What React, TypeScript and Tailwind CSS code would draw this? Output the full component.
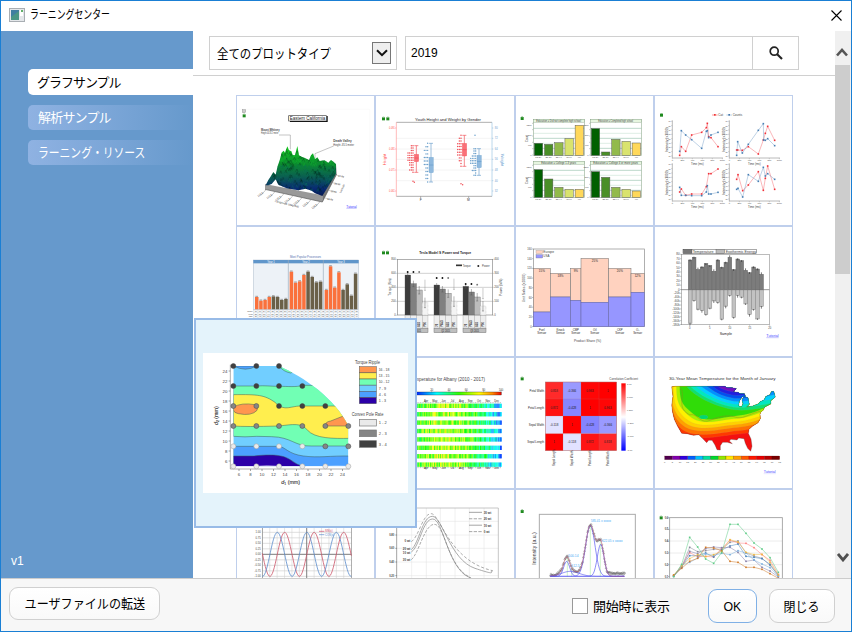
import React from 'react';

type P = [number, number];

/** Deterministic noise so that every render gives the same chart. */
function noise(n: number): number {
  const v = Math.sin(n * 127.1 + 311.7) * 43758.5453;
  return v - Math.floor(v);
}

const pts = (list: P[]) => list.map((p) => p.join(',')).join(' ');

function curve(from: number, to: number, f: (x: number) => number, step = 3): string {
  const out: string[] = [];
  for (let x = from; x <= to; x += step) out.push(`${x},${f(x).toFixed(1)}`);
  return out.join(' ');
}

const range = (n: number) => Array.from({ length: n }, (_, i) => i);

function T({ x, y, s = 12, a = 'start', c = '#444', r, b, children, w }: {
  x: number; y: number; s?: number; a?: 'start' | 'middle' | 'end'; c?: string; r?: number; b?: boolean; w?: number; children: React.ReactNode;
}) {
  return (
    <text
      x={x} y={y} fontSize={s} textAnchor={a} fill={c} fontWeight={b ? 700 : 400}
      textLength={w} lengthAdjust="spacingAndGlyphs"
      transform={r ? `rotate(${r} ${x} ${y})` : undefined}
    >
      {children}
    </text>
  );
}

function Lock({ x, y }: { x: number; y: number }) {
  return (
    <g>
      <rect x={x} y={y} width="9" height="9" fill="#1f8a1f" />
      <rect x={x + 2} y={y - 2} width="5" height="3" fill="#8abf8a" />
    </g>
  );
}

function Chart({ box, children }: { box: string; children: React.ReactNode }) {
  return (
    <svg viewBox={box} preserveAspectRatio="none" className="block h-full w-full font-['Liberation_Sans',sans-serif]">
      {children}
    </svg>
  );
}

function Surface() {
  const shape: P[] = [
    [92, 280], [100, 264], [108, 252], [115, 240], [122, 248], [128, 222], [134, 205], [140, 182], [146, 176], [150, 182], [157, 163],
    [162, 175], [169, 178], [173, 189], [180, 190], [187, 162], [192, 190], [200, 194], [210, 198], [222, 204], [228, 190], [234, 184],
    [240, 202], [247, 196], [254, 207], [268, 205], [280, 212], [288, 204], [296, 210], [303, 216], [303, 245], [262, 312], [240, 304],
    [230, 296], [212, 290], [190, 295], [155, 289], [130, 278], [122, 262], [110, 276], [100, 280],
  ];
  return (
    <Chart box="6 12 411 387">
      <defs>
        <clipPath id="surfClip"><polygon points={pts(shape)} /></clipPath>
        <linearGradient id="surfFill" gradientUnits="userSpaceOnUse" x1="0" y1="165" x2="0" y2="312">
          <stop offset="0" stopColor="#14c81e" /><stop offset=".35" stopColor="#0b8a30" />
          <stop offset=".6" stopColor="#0a6050" /><stop offset=".85" stopColor="#082a74" /><stop offset="1" stopColor="#061a50" />
        </linearGradient>
      </defs>
      <path d="M12 52H404V360" fill="none" stroke="#f2f2f2" />
      <rect x="22" y="53" width="10" height="9" fill="#ccc" stroke="#777" />
      <Lock x={23} y={67} />
      <path d="M165 88H276V72" fill="none" stroke="#000" strokeWidth="4" />
      <rect x="161" y="71" width="113" height="16" fill="#fff" stroke="#444" strokeWidth="2" />
      <T x={164} y={84} s={14} w={107} c="#222">Eastern California</T>
      <T x={78} y={117} s={9} b w={56}>Mount Whitney</T>
      <T x={78} y={127} s={8} w={52}>Height 4418.2 meter</T>
      <path d="M132 129H166V172M296 162L240 185V200" fill="none" stroke="#888" strokeWidth="1.5" />
      <T x={295} y={151} s={9} b w={55}>Death Valley</T>
      <T x={295} y={161} s={8} w={62}>Height -85.5 meter</T>
      <polygon points="90,276 262,310 262,330 90,292" fill="#999" />
      <polygon points="262,310 303,215 305,246 262,330" fill="#777" />
      <polygon points={pts(shape)} fill="url(#surfFill)" />
      <g clipPath="url(#surfClip)">
        {range(420).map((i) => {
          const x = 90 + noise(i) * 215;
          const y = 165 + noise(i + 900) * 145;
          const dark = i % 2 === 0;
          return <path key={i} d={`M${x} ${y}l${2 + noise(i + 50) * 3} -8l3 9`} fill="none" stroke={dark ? '#04251f' : y < 225 ? '#18c030' : '#10705c'} strokeWidth="1.6" opacity=".5" />;
        })}
      </g>
      <path d="M90 292L262 330L305 246" fill="none" stroke="#555" strokeWidth="2" />
      {range(7).map((i) => (
        <g key={i}>
          <path d={`M${92 + i * 27} ${294 + i * 6}l-14 16`} stroke="#777" strokeWidth="1.3" />
          <T x={70 + i * 27} y={316 + i * 6} s={8} r={-40}>{`${118 + i}.0`}</T>
        </g>
      ))}
      {range(4).map((i) => (
        <g key={i}>
          <path d={`M${303 - i * 11} ${249 + i * 23}l24 6`} stroke="#999" strokeWidth="1.3" />
          <T x={309 - i * 11} y={254 + i * 23} s={7} r={10}>{`${37 - i}.50`}</T>
        </g>
      ))}
      <T x={119} y={330} s={8} r={13} w={74}>Longitude (degree)</T>
      <T x={318} y={304} s={8} r={-65}>Latitude</T>
      <T x={334} y={347} s={11} c="#33f" w={31}>Tutorial</T>
      <path d="M334 349H365" stroke="#55f" />
    </Chart>
  );
}

function BoxGroup({ x, top, boxTop, boxBottom, bottom, color, fill, seed }: {
  x: number; top: number; boxTop: number; boxBottom: number; bottom: number; color: string; fill: string; seed: number;
}) {
  return (
    <g>
      <path d={`M${x} ${top}V${bottom}M${x - 6} ${top}h12M${x - 6} ${bottom}h12`} stroke={color} strokeWidth="2" />
      <rect x={x - 6} y={boxTop} width="13" height={boxBottom - boxTop} fill={fill} stroke={color} />
      <path d={`M${x - 6} ${(boxTop + boxBottom) / 2}h13`} stroke={color} strokeWidth="2" />
      {range(12).map((i) => {
        const y = top + ((bottom - top) * i) / 11;
        const mid = 1 - Math.abs(i - 5.5) / 5.5;
        const count = 1 + Math.floor(noise(seed + i) * 2 + mid * 2);
        return range(count).map((k) => <circle key={`${i}-${k}`} cx={x - 10 - k * 5} cy={y} r="2.2" fill={color} />);
      })}
    </g>
  );
}

function YouthBox() {
  return (
    <Chart box="423 12 414 387">
      <Lock x={441} y={76} /><Lock x={454} y={76} />
      <T x={540} y={87} s={13} w={198} c="#222">Youth Height and Weight by Gender</T>
      <path d="M484 139H771M484 171H771M484 202H771M484 234H771M484 266H771" stroke="#eee" strokeWidth="2" />
      <path d="M484 91H771M484 313H771M557 313v6M701 313v6" stroke="#888" strokeWidth="2" />
      <path d="M484 91V313M480 108h4M480 171h4M480 234h4M480 297h4" stroke="#f99" strokeWidth="2" />
      <path d="M771 91V313M771 108h4M771 139h4M771 171h4M771 202h4M771 234h4M771 266h4M771 297h4" stroke="#9bc4e2" strokeWidth="2" />
      {[108, 171, 234, 297].map((y, i) => <T key={y} x={462} y={y + 3} s={8} c="#f44" w={17}>{`0.0${9 - i}1`}</T>)}
      {[108, 139, 171, 202, 234, 266, 297].map((y, i) => <T key={y} x={779} y={y + 3} s={8} c="#6aa0d0">{80 - i * 8}</T>)}
      <T x={454} y={220} s={12} c="#f44" r={-90}>Height</T>
      <T x={799} y={185} s={12} c="#6aa0d0" r={90}>Weight</T>
      <BoxGroup x={544} top={161} boxTop={187} boxBottom={209} bottom={241} color="#f05058" fill="#fa7078" seed={3} />
      <BoxGroup x={588} top={154} boxTop={196} boxBottom={242} bottom={270} color="#6a9fcb" fill="#8fb9de" seed={21} />
      <BoxGroup x={688} top={130} boxTop={154} boxBottom={192} bottom={223} color="#f05058" fill="#fa7078" seed={42} />
      <BoxGroup x={732} top={170} boxTop={190} boxBottom={227} bottom={250} color="#6a9fcb" fill="#8fb9de" seed={66} />
      {[[534, 268], [538, 271], [678, 275], [683, 278]].map(([x, y]) => <circle key={x} cx={x} cy={y} r="2.2" fill="#f05058" />)}
      <circle cx="720" cy="130" r="2.2" fill="#6a9fcb" />
      <T x={557} y={328} s={10} a="middle">F</T>
      <T x={700} y={328} s={10} a="middle">M</T>
    </Chart>
  );
}

const GREENS = ['#006000', '#4a8f27', '#92ba4b', '#d9e36e', '#ffd85a'];

function EducationBars() {
  const panels = [
    { x: 61, y: 82, tops: [154, 157, 152, 140, 100], title: 'Education = Did not complete high school' },
    { x: 232, y: 82, tops: [110, 180, 142, 148, 153], title: 'Education = Completed high school' },
    { x: 61, y: 208, tops: [233, 261, 286, 292, 292], title: 'Education = College 1-3 years' },
    { x: 232, y: 208, tops: [239, 256, 286, 292, 297], title: 'Education = College 4 or more years' },
  ];
  return (
    <Chart box="9 12 411 387">
      <Lock x={23} y={75} />
      {panels.map((p, k) => (
        <g key={k}>
          {range(6).map((i) => (
            <g key={i}>
              <path d={`M${p.x} ${p.y + 27 + i * 15}h153`} stroke={i % 2 ? '#cfe5da' : '#9cc4b0'} strokeWidth="2" />
              <path d={`M${p.x - 4} ${p.y + 12 + i * 19}h4`} stroke="#666" />
            </g>
          ))}
          <rect x={p.x} y={p.y} width="153" height="108" fill="none" stroke="#9cb59c" strokeWidth="2" />
          <rect x={p.x} y={p.y} width="153" height="9" fill="#e6f5df" stroke="#7b967b" />
          <T x={p.x + 76} y={p.y + 8} s={8} a="middle" w={k % 3 ? 104 : 134} c="#444">{p.title}</T>
          {p.tops.map((t, i) => (
            <g key={i}>
              <rect x={p.x + 3 + i * 30.6} y={t} width="25" height={p.y + 108 - t} fill={GREENS[i]} stroke="#555" strokeWidth="1.4" />
              <T x={p.x + 15 + i * 30.6} y={p.y + 116} s={7} a="middle">{['18-24', '25-34', '35-44', '45-64', '>64'][i]}</T>
            </g>
          ))}
          {range(4).map((i) => <T key={i} x={p.x - 5} y={p.y + 110 - i * 30} s={7} a="end">{i ? i * 400 : 0}</T>)}
          {p.x < 100 && <T x={46} y={p.y + 68} s={8} r={-90}>Count</T>}
        </g>
      ))}
    </Chart>
  );
}

function Series({ points, color, size = 2.4, width = 1.5 }: { points: P[]; color: string; size?: number; width?: number }) {
  return (
    <g>
      <polyline points={pts(points)} fill="none" stroke={color} strokeWidth={width} opacity=".7" />
      {points.map((p, i) => <rect key={i} x={p[0] - size} y={p[1] - size} width={size * 2} height={size * 2} fill={color} />)}
    </g>
  );
}

function LinePanels() {
  const panels: { x: number; y: number; red: P[]; blue: P[] }[] = [
    {
      x: 478, y: 85,
      red: [[500, 190], [505, 164], [518, 178], [536, 129], [566, 121], [580, 107], [583, 94], [587, 134], [594, 137], [615, 164]],
      blue: [[500, 178], [505, 116], [518, 129], [536, 143], [566, 169], [580, 118], [583, 116], [587, 137], [594, 129], [615, 121]],
    },
    {
      x: 649, y: 85,
      red: [[671, 174], [674, 174], [688, 175], [706, 164], [736, 186], [751, 144], [757, 124], [764, 103], [785, 145]],
      blue: [[671, 190], [674, 149], [688, 183], [706, 157], [736, 115], [751, 95], [752, 144], [757, 145], [764, 140], [785, 161]],
    },
    {
      x: 478, y: 214,
      red: [[500, 300], [505, 291], [518, 310], [536, 306], [566, 306], [580, 284], [587, 245], [594, 245], [615, 231]],
      blue: [[500, 286], [505, 310], [518, 310], [536, 311], [566, 311], [580, 300], [583, 281], [587, 306], [594, 306], [615, 301]],
    },
    {
      x: 649, y: 214,
      red: [[671, 262], [675, 248], [689, 296], [706, 279], [736, 239], [751, 295], [757, 259], [764, 222], [785, 292]],
      blue: [[671, 292], [675, 289], [689, 315], [706, 248], [736, 268], [751, 226], [757, 252], [764, 245], [785, 262]],
    },
  ];
  return (
    <Chart box="426 12 411 387">
      <Lock x={441} y={65} />
      <path d="M597 69h17" stroke="#f66" strokeWidth="2" /><rect x="603" y="66" width="5" height="5" fill="#e33" />
      <path d="M640 69h17" stroke="#9bd" strokeWidth="2" /><rect x="646" y="66" width="5" height="5" fill="#47a" />
      <T x={616} y={73} s={9}>Cat</T><T x={659} y={73} s={9}>Counts</T>
      {panels.map((p, k) => (
        <g key={k}>
          <path d={`M${p.x} ${p.y}v113h152`} fill="none" stroke="#999" strokeWidth="2" />
          {range(6).map((i) => (
            <g key={i}>
              <path d={`M${p.x + i * 30} ${p.y + 113}v4`} stroke="#888" />
              <T x={p.x + i * 30} y={p.y + 122} s={7} a="middle">{i * 200}</T>
            </g>
          ))}
          {range(9).map((i) => (
            <g key={i}>
              <path d={`M${p.x - 4} ${p.y + 3 + i * 13}h4`} stroke="#888" />
              <T x={p.x - 5} y={p.y + 6 + i * 13} s={6} a="end">{90 - i * 10}</T>
            </g>
          ))}
          <T x={p.x + 75} y={p.y + 133} s={10} a="middle" w={38}>Time (ms)</T>
          <T x={p.x - 13} y={p.y + 95} s={8} r={-90} w={74}>Intensity (x1000)</T>
          <Series points={p.red} color="#f03038" />
          <Series points={p.blue} color="#477fb5" />
        </g>
      ))}
    </Chart>
  );
}

function OrangeBars() {
  const groups = [
    { x: 60, tops: [219, 230, 228, 219, 217, 219, 228, 225] },
    { x: 164, tops: [143, 176, 172, 153, 143, 159, 175, 173] },
    { x: 269, tops: [198, 127, 191, 145, 198, 181, 215, 149] },
  ];
  return (
    <Chart box="6 9 411 387">
      <T x={165} y={102} s={10} c="#5570b0" w={93}>Most Popular Processors</T>
      <rect x="55" y="108" width="316" height="148" fill="#edf2f7" stroke="#aebccc" strokeWidth="1.5" />
      <rect x="55" y="108" width="316" height="10" fill="#6096ca" />
      {['Year 1', 'Year 2', 'Year 3'].map((s, i) => <T key={s} x={108 + i * 105} y={116} s={8} a="middle" c="#fff">{s}</T>)}
      <path d="M160 108V256M265 108V256" stroke="#9ab" strokeWidth="2" />
      {groups.map((g) => g.tops.map((t, i) => (
        <g key={`${g.x}-${i}`}>
          <rect x={g.x + i * 12.5} y={t} width="10.5" height={256 - t} fill={i < 4 ? '#fa713c' : '#6a6048'} />
          <path d={`M${g.x + i * 12.5 + 1} ${t - 2}h8`} stroke="#777" strokeWidth="2" />
        </g>
      )))}
      {[258, 266, 274, 282].map((y) => <path key={y} d={`M55 ${y}H371`} stroke="#aab8c8" />)}
      {range(26).map((i) => <path key={i} d={`M${56 + i * 12.6} 256V284`} stroke="#aab8c8" />)}
      {range(3).map((r) => (
        <g key={r}>
          <T x={53} y={264 + r * 8} s={6} a="end">{['Model', 'Freq', 'TDP'][r]}</T>
          {range(25).map((i) => <T key={i} x={59 + i * 12.6} y={264 + r * 8} s={6}>{10 + ((i * 7 + r * 13) % 80)}</T>)}
        </g>
      ))}
    </Chart>
  );
}

function TeslaBars() {
  const groups = [
    { x: 510, tops: [153, 179, 198, 236], marks: [144, 144, 144, 183] },
    { x: 597, tops: [183, 195, 208, 232], marks: [162, 162, 162, 180] },
    { x: 684, tops: [187, 204, 219, 246], marks: [180, 180, 182, 208] },
  ];
  const fills = ['#3c3c3c', '#808080', '#bcbcbc', '#f4f4f4'];
  return (
    <Chart box="423 9 414 387">
      <Lock x={441} y={82} /><Lock x={453} y={82} />
      <T x={553} y={90} s={12} b c="#222" w={155}>Tesla Model S Power and Torque</T>
      <path d="M487 148H773M487 190H773M487 232H773" stroke="#aaa" strokeWidth="1.6" />
      <rect x="487" y="106" width="286" height="167" fill="none" stroke="#888" strokeWidth="2" />
      {range(5).map((i) => (
        <g key={i}>
          <path d={`M483 ${106 + i * 42}h4M773 ${106 + i * 42}h4`} stroke="#888" />
          <T x={482} y={109 + i * 42} s={8} a="end">{800 - i * 200}</T>
          <T x={778} y={109 + i * 42} s={8}>{400 - i * 100}</T>
        </g>
      ))}
      <T x={467} y={215} s={11} r={-90} w={52}>Torque (Nm)</T>
      <T x={800} y={216} s={11} r={-90} w={52}>Power (kW)</T>
      <path d="M663 124h18" stroke="#333" strokeWidth="5" /><T x={683} y={130} s={8}>Torque</T>
      <circle cx="730" cy="126" r="3" fill="#222" /><T x={741} y={129} s={8}>Power</T>
      {groups.map((g, k) => (
        <g key={k}>
          {g.tops.map((t, i) => {
            const x = g.x + i * 17.3;
            return (
              <g key={i}>
                <rect x={x} y={t} width="17" height={273 - t} fill={fills[i]} stroke={i === 3 ? '#999' : '#555'} strokeDasharray={i === 3 ? '2 2' : undefined} />
                <path d={`M${x + 8} ${t - 6 - i * 3}v${12 + i * 6}m-3 0h6`} stroke="#555" strokeWidth="1.3" />
                {i === 3
                  ? <path d={`M${x + 8} ${g.marks[i] - 16}v32m-3 0h6`} stroke="#888" strokeWidth="1.3" />
                  : <circle cx={x + 8} cy={g.marks[i]} r="2.8" fill={i === 2 ? '#777' : '#111'} />}
                <rect x={x} y="275" width="17" height="37" fill="#eee" stroke="#999" />
                <T x={x + 11} y={308} s={8} r={-90} b c="#222">{['70', 'P85D', '85D', 'P90'][i]}</T>
              </g>
            );
          })}
          <rect x={g.x} y="313" width="69" height="13" fill="#bfbfbf" stroke="#777" strokeWidth="1.5" />
          <T x={g.x + 35} y={323} s={9} a="middle" c="#111" w={26}>{['Q1 2015', 'Q2 2015', 'Q3 2015'][k]}</T>
        </g>
      ))}
    </Chart>
  );
}

function SensorShare() {
  const xs = [61, 112, 173, 204, 287, 354, 394];
  const peach = [133, 148, 133, 103, 133, 148];
  const blue = [264, 219, 229, 235, 219, 205];
  const names = ['Fuel', 'Knock', 'CMP', 'Oil', 'CKP', 'O₂'];
  const share = ['15%', '18%', '9%', '25%', '20%', '12%'];
  return (
    <Chart box="9 9 411 387">
      <rect x="61" y="75" width="333" height="233" fill="none" stroke="#888" strokeWidth="2" />
      {peach.map((t, i) => {
        const w = xs[i + 1] - xs[i];
        return (
          <g key={i}>
            <rect x={xs[i]} y={t} width={w} height={blue[i] - t} fill="#ffd2bf" stroke="#777" strokeWidth="1.6" />
            <rect x={xs[i]} y={blue[i]} width={w} height={308 - blue[i]} fill="#9696ff" stroke="#6666a5" strokeWidth="1.6" />
            <T x={xs[i] + w / 2} y={t + 12} s={9} a="middle" c="#222">{share[i]}</T>
            <T x={xs[i] + w / 2} y={320} s={8.5} a="middle" c="#222">{names[i]}</T>
            <T x={xs[i] + w / 2} y={330} s={8.5} a="middle" c="#222">Sensor</T>
          </g>
        );
      })}
      <rect x="69" y="79" width="20" height="10" fill="#ffd2bf" stroke="#999" />
      <rect x="69" y="92" width="20" height="10" fill="#9696ff" stroke="#777" />
      <T x={91} y={88} s={10}>Europe</T><T x={91} y={100} s={10} w={18}>USA</T>
      {range(9).map((i) => (
        <g key={i}><path d={`M57 ${75 + i * 29.1}h4`} stroke="#888" strokeWidth="1.5" /><T x={56} y={78 + i * 29.1} s={8} a="end">{160 - i * 20}</T></g>
      ))}
      <T x={36} y={235} s={11} r={-90} w={86}>Unit Sales (x1000)</T>
      <T x={183} y={353} s={12} w={81}>Product Share (%)</T>
    </Chart>
  );
}

function MirrorBars() {
  const up = [108, 100, 137, 129, 119, 125, 142, 108, 130, 115, 100, 137, 105, 110, 139, 146, 129, 135, 151];
  const down = [298, 230, 256, 260, 272, 253, 231, 236, 286, 247, 215, 281, 215, 220, 240, 272, 257, 285, 248];
  return (
    <Chart box="426 9 411 387">
      <rect x="510" y="76" width="221" height="12" fill="#fff" stroke="#555" strokeWidth="1.5" />
      <rect x="511" y="76" width="26" height="12" fill="#777" stroke="#444" />
      <rect x="609" y="76" width="26" height="12" fill="#bbb" stroke="#444" />
      <T x={539} y={86} s={12} w={63}>Temperature</T><T x={638} y={86} s={12} w={91}>Exothermic Energy</T>
      <rect x="505" y="91" width="264" height="211" fill="none" stroke="#999" strokeWidth="2" />
      {up.map((t, i) => (
        <g key={i}>
          <rect x={526 + i * 11.9} y={t} width="11" height={197 - t} fill="#7c7c7c" stroke="#555" strokeWidth="1.3" />
          <path d={`M${531 + i * 11.9} ${t - (i % 4 === 2 ? 6 : 2)}v6`} stroke="#333" strokeWidth="2" />
          <rect x={526 + i * 11.9} y="197" width="11" height={down[i] - 197} fill="#c2c2c2" stroke="#777" strokeWidth="1.2" />
          <path d={`M${531 + i * 11.9} ${down[i] - 2}v${i % 3 ? 5 : 8}`} stroke="#444" strokeWidth="2" />
        </g>
      ))}
      <path d="M505 197H769" stroke="#666" strokeWidth="2" />
      {range(9).map((i) => (
        <g key={i}>
          <path d={`M501 ${91 + i * 13.2}h4M501 ${208 + i * 11.7}h4`} stroke="#555" />
          <T x={500} y={94 + i * 13.2} s={9} a="end">{80 - i * 10}</T>
          <T x={500} y={211 + i * 11.7} s={9} a="end">{`-${(i + 1) * 20}k`}</T>
        </g>
      ))}
      {range(5).map((i) => <g key={i}><path d={`M${530 + i * 60} 302v5`} stroke="#777" /><T x={530 + i * 60} y={316} s={8} a="middle">{i * 5}</T></g>)}
      <T x={620} y={333} s={11} w={37} c="#222">Sample</T>
      <T x={760} y={339} s={11} w={37} c="#44f">Tutorial</T><path d="M760 341H797" stroke="#55f" />
    </Chart>
  );
}

function stripColor(t: number, n: number): string {
  const warmth = Math.sin(t * Math.PI) + (n - 0.5) * 0.5;
  const hue = Math.max(50, Math.min(225, 218 - warmth * 136));
  return `hsl(${hue.toFixed(0)} 100% 50%)`;
}

function AlbanyStrips() {
  return (
    <Chart box="-102 9 414 390">
      <defs>
        <linearGradient id="albanyBar">
          <stop offset="0" stopColor="#00c" /><stop offset=".25" stopColor="#03f" /><stop offset=".42" stopColor="#0ff" />
          <stop offset=".62" stopColor="#3f0" /><stop offset=".8" stopColor="#ff0" /><stop offset=".92" stopColor="#f80" /><stop offset="1" stopColor="#e00" />
        </linearGradient>
      </defs>
      <T x={-32} y={77} s={14} w={257}>Daily Temperature for Albany (2010 - 2017)</T>
      <rect x="-60" y="111" width="334" height="9" fill="url(#albanyBar)" stroke="#222" />
      {[15, 65, 117, 169, 221, 273].map((x, i) => <g key={x}><path d={`M${x} 104v8`} stroke="#555" /><T x={x} y={109} s={8} a="middle">{i * 20}</T></g>)}
      <path d="M-60 143H274M-60 338H274" stroke="#444" strokeDasharray="3 2" />
      {['Apr', 'May', 'Jun', 'Jul', 'Aug', 'Sep', 'Oct', 'Nov', 'Dec'].map((m, i) => (
        <g key={m}><T x={48 + i * 26.5} y={141} s={8} a="middle" c="#222">{m}</T><T x={48 + i * 26.5} y={342} s={8} a="middle" c="#222">{m}</T></g>
      ))}
      {range(8).map((r) => (
        <g key={r}>
          {range(134).map((i) => <rect key={i} x={-60 + i * 2.5} y={146 + r * 25.2} width="2.8" height="13" fill={stripColor((i + 4) / 140, noise(i * 3 + r * 211))} />)}
        </g>
      ))}
    </Chart>
  );
}

function Correlation() {
  const xs = [406, 459, 513, 567, 620];
  const ys = [81, 132, 183, 236, 287];
  const cells = [
    ['#ff2a2a', '#9a9aff', '#ff0606', '#ff0000'],
    ['#ff1212', '#8686ff', '#ff0000', '#ff0606'],
    ['#e2e2ff', '#ff0000', '#8484ff', '#9a9aff'],
    ['#ff0000', '#e2e2ff', '#ff1414', '#ff2828'],
  ];
  const values = [['0.818', '-0.366', '0.963', '1'], ['0.872', '-0.428', '1', '0.963'], ['-0.118', '1', '-0.428', '-0.366'], ['1', '-0.118', '0.872', '0.818']];
  const names = ['Petal Width', 'Petal Length', 'Sepal Width', 'Sepal Length'];
  return (
    <Chart box="318 9 411 390">
      <defs><linearGradient id="corrBar" x2="0" y2="1"><stop offset="0" stopColor="red" /><stop offset=".5" stopColor="#fff" /><stop offset="1" stopColor="#00f" /></linearGradient></defs>
      <Lock x={332} y={67} />
      <T x={598} y={76} s={9} w={86}>Correlation Coefficient</T>
      {cells.map((row, r) => row.map((c, i) => (
        <g key={`${r}-${i}`}>
          <rect x={xs[i]} y={ys[r]} width={xs[i + 1] - xs[i]} height={ys[r + 1] - ys[r]} fill={c} />
          <T x={(xs[i] + xs[i + 1]) / 2} y={ys[r] + 29} s={9} a="middle" c="#222">{values[r][i]}</T>
        </g>
      )))}
      <path d="M459 81V287M513 81V287M567 81V287M406 132H620M406 183H620M406 236H620" stroke="#a77" opacity=".6" />
      <rect x="406" y="81" width="214" height="206" fill="none" stroke="#a66" strokeWidth="1.5" />
      {names.map((n, i) => (
        <g key={n}>
          <T x={402} y={ys[i] + 29} s={8.5} a="end" c="#222">{n}</T>
          <T x={xs[i] + 30} y={333} s={8.5} r={-90} c="#222">{names[3 - i]}</T>
        </g>
      ))}
      <rect x="634" y="85" width="13" height="202" fill="url(#corrBar)" />
      {['1.00', '0.600', '0.200', '-0.200', '-0.600', '-1.00'].map((s, i) => <T key={s} x={651} y={89 + i * 39.5} s={7}>{s}</T>)}
    </Chart>
  );
}

const USA = 'M785 95L797 94L945 94L950 98L966 98L979 101L970 110L984 112L990 116L1003 116L1006 122L996 126L988 138L986 153L994 156L999 146L996 134L1003 124L1014 128L1016 139L1018 148L1010 156L1028 153L1046 146L1050 140L1062 135L1068 124L1080 119L1084 110L1091 109L1096 126L1082 137L1083 146L1076 150L1064 156L1060 165L1052 172L1050 178L1051 191L1044 203L1027 214L1017 223L1015 235L1023 252L1026 274L1022 289L1013 280L1006 265L1002 251L986 249L981 255L963 253L958 258L967 266L952 262L938 262L931 272L931 285L921 284L915 270L906 256L896 256L890 263L880 253L867 239L850 241L831 236L815 235L803 214L793 193L788 172L785 151L789 124Z';

function UsMap() {
  /* Warm isotherms bend down the west coast; cold ones run from the northern border to the east. */
  const warm: [string, number, number, number][] = [
    ['#ff3800', 770, 240, 30], ['#ff7000', 774, 230, 34], ['#ffa000', 778, 220, 38], ['#ffd000', 783, 211, 42],
    ['#fff000', 790, 202, 44], ['#a8f000', 799, 193, 46], ['#30dc08', 809, 185, 48],
  ];
  const cold: [string, number, number][] = [
    ['#10e070', 822, 160], ['#00e8c0', 832, 152], ['#00d0ff', 845, 143], ['#0090ff', 857, 134],
    ['#0050f0', 868, 125], ['#2020e0', 880, 116], ['#7010c0', 893, 106],
  ];
  const scale = ['#500050', '#8000b0', '#3000e0', '#0060ff', '#00c0ff', '#00e0a0', '#00d830', '#90e800', '#ffe800', '#ffa000', '#ff5800', '#ff1800', '#e80000', '#b80000', '#780000'];
  return (
    <Chart box="735 9 411 390">
      <defs><clipPath id="usaClip"><path d={USA} /></clipPath></defs>
      <T x={777} y={74} s={13} w={320} c="#333">30-Year Mean Temperature for the Month of January</T>
      <g clipPath="url(#usaClip)" stroke="#b6a080" strokeOpacity=".4" strokeWidth="1">
        <rect x="780" y="90" width="325" height="205" fill="#f41010" />
        {warm.map(([color, a, y, rise]) => (
          <path key={color} fill={color} d={`M${a} 85C${a} 140,${a + 5} ${y - 38},${a + 40} ${y - 9}S920 ${y + 5},960 ${y}S1020 ${y - 2},1110 ${y - rise}V85Z`} />
        ))}
        {cold.map(([color, a, y], i) => (
          <path key={color} fill={color} d={`M${a} 85C${a + 30} ${y - 34},905 ${y - 12},950 ${y}S${1030 - i * 6} ${y + 4},${1110 - i * 4} ${y - 10 - i * 2}V85Z`} />
        ))}
        <ellipse cx="881" cy="186" rx="13" ry="6" fill="#00d870" />
        <path d="M811 98C826 115,805 150,824 168S840 176,852 180S875 206,900 196S952 178,975 186S1006 181,1052 168" fill="none" stroke="#a07820" strokeOpacity=".9" strokeWidth="1.4" />
      </g>
      <path d={USA} fill="none" stroke="#333" strokeWidth=".8" />
      {scale.map((c, i) => <rect key={c} x={764 + i * 23} y="303" width="23" height="11" fill={c} stroke="#400" strokeWidth=".6" />)}
      {range(16).map((i) => <T key={i} x={764 + i * 23} y={324} s={7} a="middle">{i * 5}</T>)}
      <T x={1061} y={354} s={12} w={36} c="#44f">Tutorial</T>
      <path d="M1061 356H1098" stroke="#bbf" />
    </Chart>
  );
}

function SineWaves() {
  const wave = (peak: number) => (x: number) => 208 - 66 * Math.cos(((x - peak) / 88.5) * Math.PI * 2);
  return (
    <Chart box="6 15 411 387">
      {range(11).map((i) => <path key={i} d={`M82 ${142 + i * 16.5}H349`} stroke="#bbb" strokeWidth="1.4" />)}
      {range(12).map((i) => <path key={i} d={`M${82 + i * 22.2} 120V330`} stroke="#ccc" strokeWidth="1.4" />)}
      <path d="M82 208H349M215 120V330" stroke="#555" strokeWidth="2" />
      <rect x="82" y="105" width="267" height="230" fill="none" stroke="#888" strokeWidth="2" />
      <polyline points={curve(82, 349, wave(149))} fill="none" stroke="#cc5468" strokeWidth="2.4" />
      <polyline points={curve(82, 349, wave(127))} fill="none" stroke="#5a8ccc" strokeWidth="2.4" />
      {range(9).map((i) => <T key={i} x={77} y={145 + i * 16.5} s={8} a="end">{(1 - i * 0.25).toFixed(2)}</T>)}
      <path d="M252 139h16" stroke="#c46" strokeWidth="2" /><path d="M252 149h16" stroke="#58c" strokeWidth="2" />
      <T x={270} y={142} s={8} c="#c46">SIN(x)</T><T x={270} y={152} s={8} c="#58c">COS(x)</T>
    </Chart>
  );
}

function DecayCurves() {
  const lines: { d: string; dash?: string }[] = [
    { d: 'M529 194C552 175,562 94,592 94S645 225,720 250S758 257,773 258' },
    { d: 'M529 201C555 183,563 102,593 102S635 228,690 270L712 282' },
    { d: 'M529 170C552 155,563 85,589 86S642 228,773 257', dash: '9 6' },
    { d: 'M529 224C552 205,568 118,598 118S635 225,690 268L712 282', dash: '9 4' },
  ];
  return (
    <Chart box="423 15 414 387">
      <path d="M485 109H790M485 150H790M485 190H790M485 231H790M485 272H790M530 69V300M574 69V300M616 69V300M660 69V300M703 69V300M747 69V300" stroke="#e2e2e2" strokeWidth="1.6" />
      <path d="M485 69H790V300" fill="none" stroke="#aaa" strokeWidth="2" />
      <path d="M485 69V300" stroke="#777" strokeWidth="2" />
      {[150, 190, 231, 272].map((y, i) => <g key={y}><path d={`M481 ${y}h5`} stroke="#777" strokeWidth="2" /><T x={478} y={y + 3} s={8} a="end" b>{`0.${8 - i * 2}0`}</T></g>)}
      {lines.map((l, i) => <path key={i} d={l.d} fill="none" stroke="#808080" strokeWidth="2" strokeDasharray={l.dash} />)}
      {[[169, '0 wt'], [191, '20 wt'], [205, '10 wt'], [225, '30 wt']].map(([y, s]) => <T key={s} x={526} y={Number(y) + 3} s={9} a="end" b>{s}</T>)}
      {['30 wt', '20 wt', '10 wt', '0 wt'].map((s, i) => (
        <g key={s}><path d={`M702 ${82 + i * 19.3}h39`} stroke="#777" strokeWidth="2" strokeDasharray={i % 2 ? '10 4' : undefined} /><T x={746} y={86 + i * 19.3} s={9} b>{s}</T></g>
      ))}
    </Chart>
  );
}

function PeakFit() {
  const g = (x: number, c: number, w: number, h: number) => h * Math.exp(-((x - c) ** 2) / (2 * w * w));
  const total = (x: number) => 274 - g(x, 161, 9, 45) - g(x, 172, 26, 15) - g(x, 232, 14, 153) - g(x, 263, 10, 96);
  return (
    <Chart box="9 15 411 387">
      <Lock x={23} y={75} />
      <rect x="79" y="88" width="288" height="220" fill="none" stroke="#aaa" strokeWidth="3" />
      <path d="M163 218V275M176 248V275M232 118V275M262 170V275" stroke="#b8efb0" strokeWidth="2" />
      {range(125).map((i) => {
        const x = 112 + i * 1.8;
        const base = x > 285 ? 8 : x < 145 ? 3 : 0;
        return <circle key={i} cx={x} cy={total(x) - base + (noise(i) - 0.5) * 7} r="2.4" fill="none" stroke="#555" strokeWidth="1.1" />;
      })}
      {[[161, 9, 45], [172, 26, 15], [232, 14, 153], [263, 10, 96]].map(([c, w, h]) => (
        <polyline key={c} points={curve(112, 336, (x) => 274 - g(x, c, w, h))} fill="none" stroke="#5454f0" strokeWidth="2" />
      ))}
      <polyline points={curve(112, 336, total)} fill="none" stroke="#c06078" strokeWidth="1.8" />
      <T x={234} y={110} s={11} c="#48aaf5" w={60}>585.41 ± xxxxx</T>
      <T x={267} y={170} s={11} c="#48aaf5" w={62}>622.05 ± xxxxx</T>
      <T x={166} y={216} s={10} c="#48aaf5">500.14</T><T x={175} y={247} s={10} c="#48aaf5">512.5</T>
      <T x={70} y={239} s={15} r={-90} w={97} c="#333">Intensity (a.u.)</T>
    </Chart>
  );
}

function MultiLines() {
  const xs = [482, 506, 530, 554, 578, 602, 626, 651, 675, 699, 723, 747, 771, 796];
  const series: [string, number[]][] = [
    ['#8a8a9a', [274, 246, 187, 200, 197, 193, 192, 172, 168, 204, 213, 220, 241, 270]],
    ['#ff8080', [272, 242, 203, 215, 214, 216, 190, 166, 174, 175, 188, 209, 226, 268]],
    ['#4a84bb', [273, 245, 212, 212, 204, 216, 195, 183, 177, 214, 217, 221, 238, 272]],
    ['#8880aa', [272, 248, 199, 206, 191, 186, 188, 187, 202, 229, 225, 247, 258, 276]],
    ['#7aaede', [274, 240, 232, 219, 207, 211, 205, 209, 197, 204, 225, 237, 248, 274]],
    ['#f0b840', [271, 243, 221, 209, 215, 209, 199, 164, 171, 202, 209, 208, 232, 270]],
    ['#d07a28', [270, 250, 229, 220, 187, 189, 197, 229, 232, 247, 247, 253, 266, 280]],
    ['#60cc88', [275, 238, 157, 186, 222, 235, 203, 118, 118, 145, 174, 192, 218, 262]],
  ];
  return (
    <Chart box="426 15 411 387">
      <Lock x={440} y={94} />
      <path d="M470 133H808M470 168H808M470 204H808M470 239H808" stroke="#e2e2e2" strokeWidth="2" />
      <rect x="470" y="98" width="338" height="220" fill="none" stroke="#999" strokeWidth="2.5" />
      {range(6).map((i) => <g key={i}><path d={`M465 ${98 + i * 35.3}h5`} stroke="#999" strokeWidth="2" /><T x={466} y={101 + i * 35.3} s={8} a="end" b>{(0.6 - i * 0.1).toFixed(1)}</T></g>)}
      {series.map(([c, ys]) => <Series key={c} color={c} width={2.2} points={ys.map((y, i): P => [xs[i], y])} />)}
    </Chart>
  );
}

const DOMAIN = 'M130 153H267C340 185,435 250,475 333V454H130Z';

function TorqueRipple() {
  const legend: [string, string][] = [['#ff964f', '16 - 18'], ['#ffee4e', '13 - 15'], ['#71ffb4', '10 - 12'], ['#71ceff', '7 - 9'], ['#4ca0ff', '4 - 6'], ['#2c00a8', '1 - 3']];
  const nodes: [number, number, string][] = [];
  [[130, 199, 267], [130, 199, 267, 337]].forEach((row, i) => row.forEach((x) => nodes.push([x, i ? 213 : 153, '#404040'])));
  [130, 199].forEach((x) => nodes.push([x, 273, '#858585']));
  [267, 337, 406].forEach((x) => nodes.push([x, 273, '#404040']));
  [130, 199, 267, 337, 406, 475].forEach((x, i) => {
    nodes.push([x, 333, '#858585']);
    nodes.push([x, 394, i < 4 ? '#eaeaea' : '#858585']);
    nodes.push([x, 454, '#eaeaea']);
  });
  return (
    <Chart box="39 114 615 420">
      <defs><clipPath id="rippleClip"><path d={DOMAIN} /></clipPath></defs>
      <g clipPath="url(#rippleClip)" stroke="#3f5d58" strokeWidth="1.5">
        <rect x="125" y="145" width="360" height="315" fill="#71ceff" />
        <path d="M130 153Q168 172 199 153Z" fill="#4ca0ff" />
        <path d="M267 153Q280 170 302 174L320 165L280 145Z" fill="#71ffb4" />
        <path d="M130 213H199C225 211,240 214,267 214S320 217,337 211L480 211V393H365C315 395,305 366,245 365L200 364Q165 367 130 364Z" fill="#71ffb4" />
        <path d="M130 239C205 238,224 240,255 262C282 290,300 274,330 273H406L480 273V370C430 371,374 371,352 345C333 323,310 328,267 333Q165 336 130 333Z" fill="#ffee4e" />
        <path d="M130 276Q155 262 195 269Q207 275 201 286Q185 304 145 296Q132 294 130 285Z" fill="#ff964f" />
        <path d="M406 333Q405 320 422 318L460 303L480 333Z" fill="#ff964f" />
        <path d="M130 394H267C286 396,294 417,340 423S420 422,480 423V460H130Z" fill="#4ca0ff" />
        <path d="M130 423H190C267 415,285 425,302 435Q320 450 350 458H130Z" fill="#2c00a8" />
        <path d="M199 454Q230 450 267 454M406 454Q440 452 475 454" fill="none" stroke="#fff" />
        <path d="M337 211L420 270L406 273Z" fill="#71ffb4" stroke="none" />
      </g>
      <path d="M121 149V462H479" fill="none" stroke="#888" strokeWidth="2" />
      {range(10).map((i) => (
        <g key={i}>
          <path d={`M116 ${438 - i * 30}h5M${147 + i * 34.5} 462v6`} stroke="#777" strokeWidth="2" />
          <T x={112} y={443 - i * 30} s={13} a="end">{6 + i * 2}</T>
          <T x={147 + i * 34.5} y={482} s={13} a="middle">{6 + i * 2}</T>
        </g>
      ))}
      {nodes.map(([x, y, c], i) => <circle key={i} cx={x} cy={y} r="7.5" fill={c} stroke={c === '#eaeaea' ? '#999' : '#444'} strokeWidth="1.4" />)}
      <text x="84" y="330" fontSize="16" fill="#333" stroke="#333" strokeWidth=".3" transform="rotate(-90 84 330)"><tspan fontStyle="italic">d</tspan><tspan fontSize="10" dy="3">2</tspan><tspan dy="-3"> (mm)</tspan></text>
      <text x="274" y="506" fontSize="16" fill="#333" stroke="#333" strokeWidth=".3"><tspan fontStyle="italic">d</tspan><tspan fontSize="10" dy="3">1</tspan><tspan dy="-3"> (mm)</tspan></text>
      <T x={495} y={146} s={14} w={75}>Torque Ripple</T>
      {legend.map(([c, s], i) => (
        <g key={s}>
          <rect x="508" y={155 + i * 18.5} width="51" height="18.5" fill={c} stroke="#555" strokeWidth="1.5" />
          <T x={566} y={168 + i * 18.5} s={11} w={i < 3 ? 32 : 22}>{s}</T>
        </g>
      ))}
      <T x={485} y={303} s={14} w={95}>Convex Pole Rate</T>
      {['#eaeaea', '#858585', '#404040'].map((c, i) => (
        <g key={c}>
          <rect x="508" y={313 + i * 32} width="51" height="20" fill={c} stroke="#777" strokeWidth="2" />
          <T x={566} y={328 + i * 32} s={12} w={24}>{`${i + 1} - ${i + 2}`}</T>
        </g>
      ))}
    </Chart>
  );
}

const CHARTS = [
  Surface, YouthBox, EducationBars, LinePanels,
  OrangeBars, TeslaBars, SensorShare, MirrorBars,
  null, AlbanyStrips, Correlation, UsMap,
  SineWaves, DecayCurves, PeakFit, MultiLines,
];

function TitleBar() {
  return (
    <header className="flex h-[30px] shrink-0 items-center bg-white pb-0.5 pl-2 pr-[9px]">
      <svg width="16" height="14" viewBox="0 0 16 14">
        <rect x=".5" y=".5" width="15" height="13" fill="#e4e7ea" stroke="#a9aeb3" />
        <rect x="2" y="2" width="8" height="10" fill="#3f7fa0" />
        <path d="M2 9L10 3V12H2Z" fill="#4fa078" opacity=".7" />
        <rect x="11" y="2" width="3" height="6" fill="#fff" /><rect x="12" y="2" width="2" height="2" fill="#62b06a" />
      </svg>
      <h1 className="ml-[5px] origin-left scale-x-[0.74] whitespace-nowrap text-[12px] leading-none text-black">ラーニングセンター</h1>
      <button aria-label="閉じる" className="ml-auto">
        <svg width="11" height="11" viewBox="0 0 11 11"><path d="M.5 .5L10.5 10.5M10.5 .5L.5 10.5" stroke="#000" strokeWidth="1.1" /></svg>
      </button>
    </header>
  );
}

function Sidebar() {
  return (
    <aside className="flex w-48 shrink-0 flex-col bg-[#6699cc] pl-[27px] pt-[38px] text-[13px] leading-none text-white">
      <nav className="flex flex-col gap-[10px]">
        <a className="flex h-[26px] items-center whitespace-nowrap rounded-l-[5px] bg-white pl-[9px] tracking-[-1px] text-black">グラフサンプル</a>
        <a className="flex h-[25px] items-center whitespace-nowrap rounded-l-[5px] bg-gradient-to-r from-[#8fb2e2] to-[#6699cc] pl-[10px] tracking-[-0.8px]">解析サンプル</a>
        <a className="flex h-[25px] items-center whitespace-nowrap rounded-l-[5px] bg-gradient-to-r from-[#8fb2e2] to-[#6699cc] pl-[10px]">
          <span className="origin-left scale-x-[0.83]">ラーニング・リソース</span>
        </a>
      </nav>
      <span className="-ml-[17px] mb-[11px] mt-auto text-[12px]">v1</span>
    </aside>
  );
}

function Toolbar() {
  return (
    <div className="flex h-[45px] shrink-0 gap-2 border-b border-[#d0d0d0] pl-4 pt-[5px] text-[13px] leading-none text-black">
      <div className="flex h-[34px] w-[188px] items-center border border-[#d0d0d0] bg-white pl-[7px] pr-[5px]">
        <span className="w-[114px] origin-left scale-x-[0.877] whitespace-nowrap">全てのプロットタイプ</span>
        <span className="ml-auto flex h-[22px] w-[19px] items-center justify-center border border-[#777] bg-[#eee]">
          <svg width="12" height="8" viewBox="0 0 12 8"><path d="M1 1.2L6 6.2L11 1.2" fill="none" stroke="#111" strokeWidth="2" /></svg>
        </span>
      </div>
      <div className="flex h-[34px] w-[394px] border border-[#d0d0d0] bg-white">
        <span className="flex flex-1 items-center pl-[5px] text-[12px]">2019</span>
        <button aria-label="検索" className="flex w-[46px] items-center justify-center border-l border-[#d0d0d0]">
          <svg width="14" height="14" viewBox="0 0 14 14"><circle cx="5.2" cy="5.2" r="4" fill="none" stroke="#222" strokeWidth="1.7" /><path d="M8.2 8.2L13 13" stroke="#222" strokeWidth="2.1" /></svg>
        </button>
      </div>
    </div>
  );
}

function Scrollbar() {
  return (
    <div className="flex w-4 shrink-0 flex-col items-center bg-[#f0f0f0]">
      <div className="flex h-[34px] w-full items-center justify-center pr-0.5 pt-2">
        <svg width="12" height="9" viewBox="0 0 12 9"><path d="M1 7.5L6 2L11 7.5" fill="none" stroke="#555" strokeWidth="2.6" /></svg>
      </div>
      <div className="mr-px h-[209px] w-[15px] bg-[#cdcdcd]" />
      <svg className="mb-[16px] mt-auto" width="12" height="10" viewBox="0 0 12 10"><path d="M1 2L6 8L11 2" fill="none" stroke="#505050" strokeWidth="2.8" /></svg>
    </div>
  );
}

function Footer() {
  const button = 'flex items-center justify-center whitespace-nowrap rounded-[9px] border bg-gradient-to-b from-white to-[#f9f9f9]';
  return (
    <footer className="flex h-[53px] shrink-0 items-start border-t border-[#ccc] bg-[#f7f7f7] pl-2 pr-4 text-[13px] leading-none text-black">
      <button className={`${button} mt-2 h-[33px] w-[151px] border-[#d0d0d0]`}><span className="scale-x-[0.93]">ユーザファイルの転送</span></button>
      <label className="ml-auto mt-[19px] flex items-center">
        <span className="h-4 w-4 border border-[#999] bg-white" />
        <span className="ml-[5px] w-[77px] whitespace-nowrap tracking-[-0.2px]">開始時に表示</span>
      </label>
      <button className={`${button} ml-[38px] mt-[10px] h-[34px] w-[49px] border-[#7fb0e6]`}><span className="scale-x-[0.95]">OK</span></button>
      <button className={`${button} ml-3 mt-[10px] h-[34px] w-[66px] border-[#d0d0d0]`}><span className="scale-x-[0.92]">閉じる</span></button>
    </footer>
  );
}

export default function App() {
  return (
    <div className="relative flex h-[632px] w-[852px] flex-col overflow-hidden border border-[#1a7fd4] bg-white font-['Liberation_Sans','Noto_Sans_CJK_JP',sans-serif]">
      <TitleBar />
      <div className="flex min-h-0 flex-1">
        <Sidebar />
        <main className="flex min-w-0 flex-1 flex-col overflow-hidden">
          <Toolbar />
          <div className="min-h-0 flex-1 overflow-hidden pl-[43px] pt-[19px]">
            <div className="grid w-[557px] grid-cols-[139px_140px_139px_139px] grid-rows-[131px_131px_132px_131px]">
              {CHARTS.map((C, i) => (
                <div key={i} className="min-h-0 min-w-0 border border-[#bfcfec] bg-white">{C && <C />}</div>
              ))}
            </div>
          </div>
        </main>
        <Scrollbar />
      </div>
      <Footer />
      <div className="absolute left-[193px] top-[317px] flex h-[210px] w-[223px] flex-col border-2 border-[#98bbe7] bg-[#e4f3fb] px-[7px] pt-[33px]">
        <div className="h-[140px] w-[205px] bg-white"><TorqueRipple /></div>
      </div>
    </div>
  );
}
